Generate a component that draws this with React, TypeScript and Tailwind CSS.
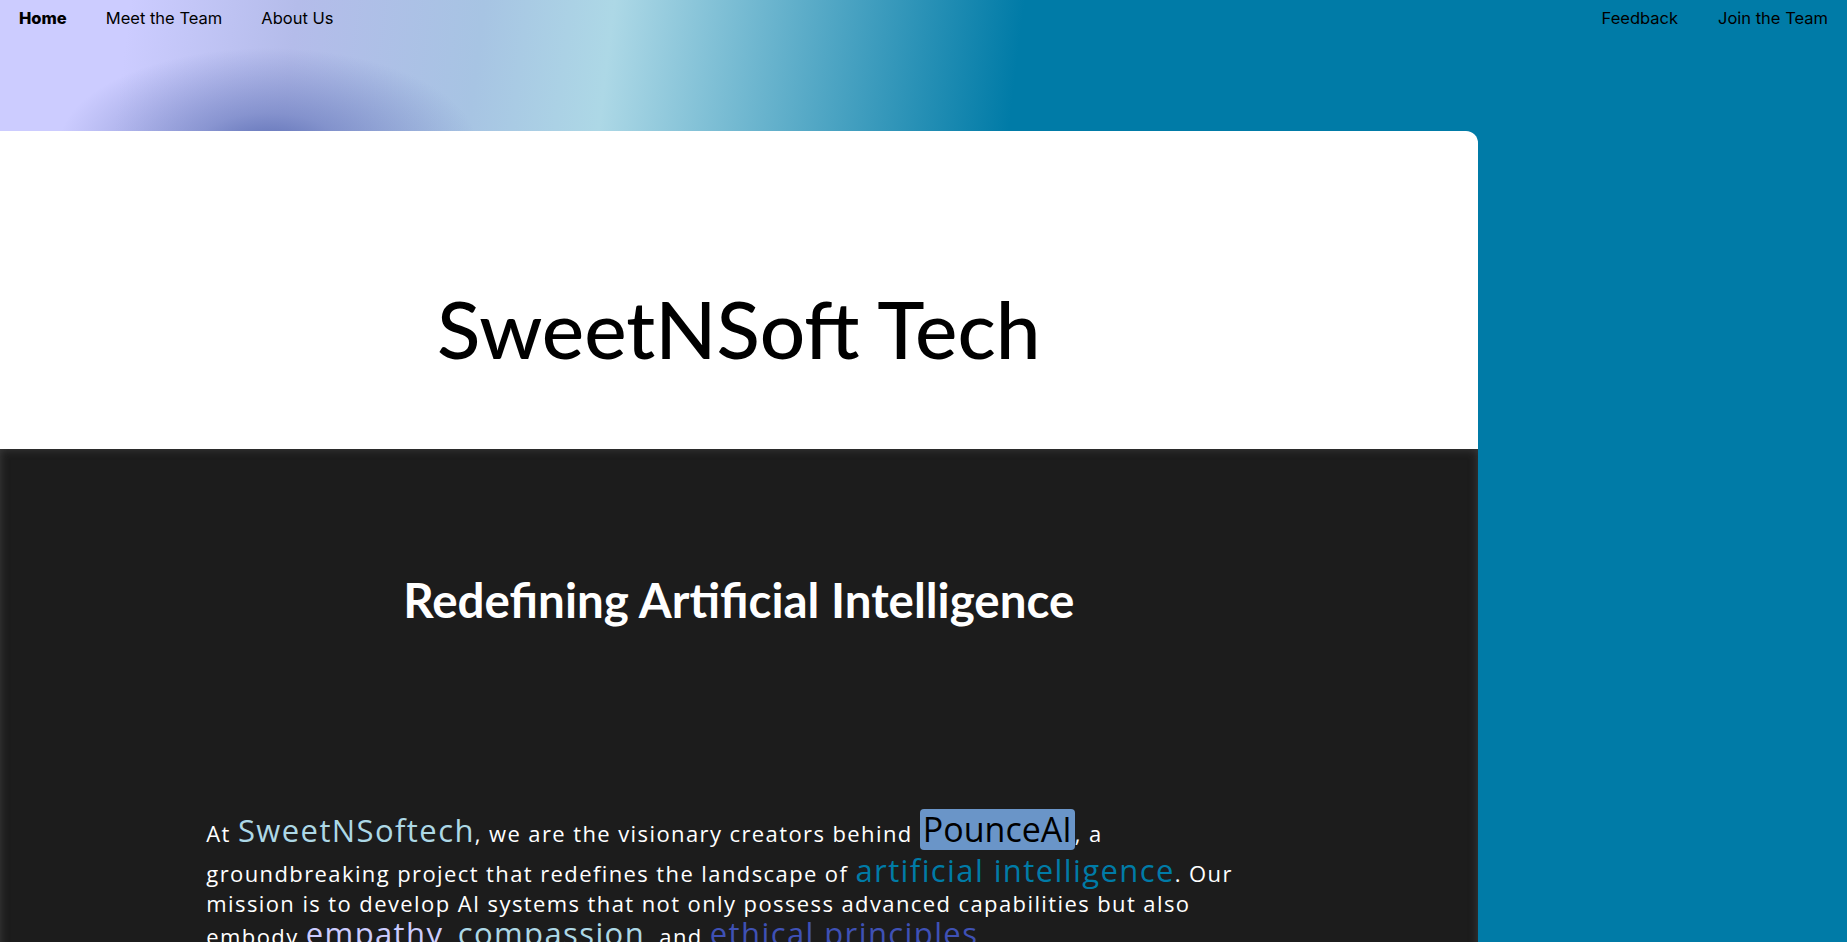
import React from "react";

export default function App() {
  return (
    <div className="w-full h-[942px] overflow-hidden bg-[#007ba7]">
      <header className="h-[131px] w-full bg-[radial-gradient(210px_100px_at_268px_148px,#5d6fb5,rgba(93,111,181,0.55)_35%,rgba(93,111,181,0)),linear-gradient(97deg,#ccccff_7%,#b4bcea_16%,#a7c4e3_26%,#add8e6_33%,#007ba7_55%)]">
        <nav className="flex justify-between pt-[6px] px-[19px] text-[16.5px] leading-6 text-black font-['Inter',sans-serif]">
          <div className="flex gap-[39px]">
            <a className="font-extrabold">Home</a>
            <a>Meet the Team</a>
            <a>About Us</a>
          </div>
          <div className="flex gap-[40px]">
            <a>Feedback</a>
            <a>Join the Team</a>
          </div>
        </nav>
      </header>
      <main className="w-4/5 rounded-tr-xl overflow-hidden">
        <section className="h-[318px] bg-white pt-[149px] text-center">
          <h1 className="font-['Lato',sans-serif] font-medium text-[80px] leading-[1.2] text-black">SweetNSoft Tech</h1>
        </section>
        <section className="bg-[#1c1c1c] h-[600px] shadow-[inset_0_0_10px_rgba(90,90,90,0.55)] pt-[122px]">
          <h2 className="font-['Lato',sans-serif] font-bold text-[47.5px] leading-[1.2] text-white text-center">
            Redefining Artificial Intelligence
          </h2>
          <p className="mx-auto mt-[181px] w-[1065px] font-['Open_Sans',sans-serif] text-[22px] tracking-[1.4px] leading-[30px] text-white">
            At <span className="text-[31px] text-[#add8e6]">SweetNSoftech</span>, we are the visionary creators behind{" "}
            <span className="inline-block text-[34px] leading-[1.2] tracking-normal text-black bg-[#6a95c8] rounded-[4px] px-[3px] mb-[5px]">
              PounceAI
            </span>
            , a groundbreaking project that redefines the landscape of{" "}
            <span className="text-[31px] text-[#007ba7]">artificial intelligence</span>. Our mission is to develop AI
            systems that not only possess advanced capabilities but also embody{" "}
            <span className="text-[31px] text-[#ccccff]">empathy</span>,{" "}
            <span className="text-[31px] text-[#add8e6]">compassion</span>, and{" "}
            <span className="text-[31px] text-[#3f51b5]">ethical principles</span>.
          </p>
        </section>
      </main>
    </div>
  );
}
